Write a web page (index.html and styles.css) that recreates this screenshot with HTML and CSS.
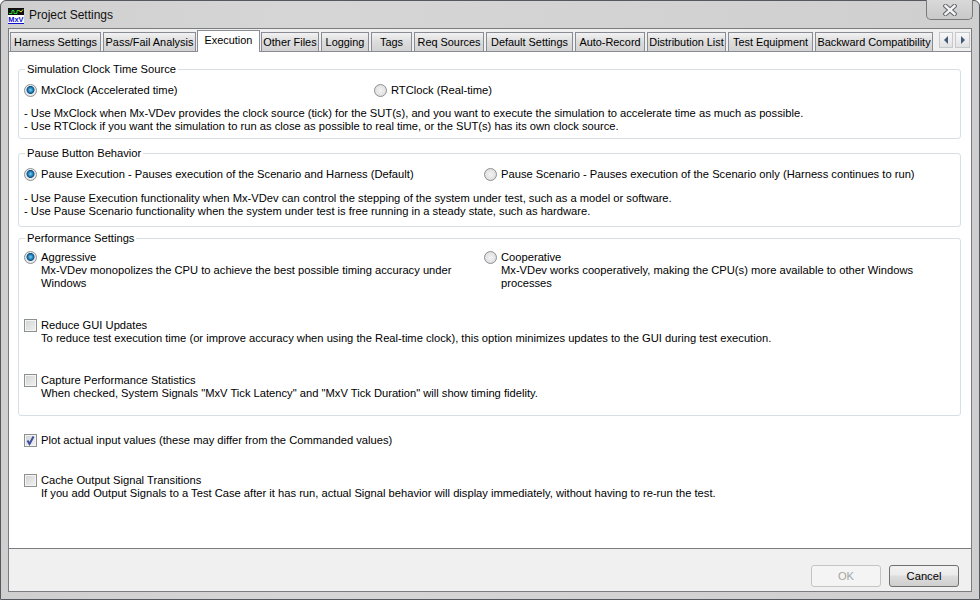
FILE: index.html
```html
<!DOCTYPE html>
<html lang="en">
<head>
<meta charset="utf-8">
<title>Project Settings</title>
<link rel="stylesheet" href="styles.css">
</head>
<body>
<div class="window">
  <header class="titlebar">
    <svg class="logo" width="16" height="16" viewBox="0 0 16 16">
      <rect width="16" height="7" fill="#101010"/>
      <path d="M1 5.5h3V2.5h2v3h3V2.5h2" fill="none" stroke="#2ed42e"/>
      <path d="M11 2.5l2 1.5 2-2.5" fill="none" stroke="#e8e820"/>
      <rect y="7" width="16" height="9" fill="#fff"/>
      <text x="0.3" y="14" class="logo-text">MxV</text>
      <rect y="15" width="16" height="1" fill="#1010d0"/>
    </svg>
    <span class="title">Project Settings</span>
    <button class="close" type="button" aria-label="Close">
      <svg width="14" height="12" viewBox="0 0 14 12"><path d="M2.5 2 11.5 10M11.5 2 2.5 10" stroke="#64666a" stroke-width="4.5" stroke-linecap="square"/><path d="M2.5 2 11.5 10M11.5 2 2.5 10" stroke="#f4f4f4" stroke-width="2.4" stroke-linecap="square"/></svg>
    </button>
  </header>
  <div class="client">
    <nav class="tabstrip">
      <div class="tabs">
        <span class="tab">Harness Settings</span>
        <span class="tab">Pass/Fail Analysis</span>
        <span class="tab active">Execution</span>
        <span class="tab">Other Files</span>
        <span class="tab">Logging</span>
        <span class="tab">Tags</span>
        <span class="tab">Req Sources</span>
        <span class="tab">Default Settings</span>
        <span class="tab">Auto-Record</span>
        <span class="tab">Distribution List</span>
        <span class="tab">Test Equipment</span>
        <span class="tab">Backward Compatibility</span>
      </div>
      <div class="scrollers">
        <span class="scroller first"><i class="arrow left"></i></span>
        <span class="scroller"><i class="arrow right"></i></span>
      </div>
    </nav>
    <main class="panel">
      <fieldset class="group group-clock">
        <legend>Simulation Clock Time Source</legend>
        <div class="choices choices-clock">
          <label class="opt"><span class="radio on"></span><span>MxClock (Accelerated time)</span></label>
          <label class="opt"><span class="radio"></span><span>RTClock (Real-time)</span></label>
        </div>
        <p class="note note-clock">- Use MxClock when Mx-VDev provides the clock source (tick) for the SUT(s), and you want to execute the simulation to accelerate time as much as possible.<br>- Use RTClock if you want the simulation to run as close as possible to real time, or the SUT(s) has its own clock source.</p>
      </fieldset>
      <fieldset class="group group-pause">
        <legend>Pause Button Behavior</legend>
        <div class="choices choices-pause">
          <label class="opt"><span class="radio on"></span><span>Pause Execution - Pauses execution of the Scenario and Harness (Default)</span></label>
          <label class="opt"><span class="radio"></span><span>Pause Scenario - Pauses execution of the Scenario only (Harness continues to run)</span></label>
        </div>
        <p class="note">- Use Pause Execution functionality when Mx-VDev can control the stepping of the system under test, such as a model or software.<br>- Use Pause Scenario functionality when the system under test is free running in a steady state, such as hardware.</p>
      </fieldset>
      <fieldset class="group group-perf">
        <legend>Performance Settings</legend>
        <div class="choices choices-perf">
          <label class="opt"><span class="radio on"></span><span>Aggressive<br>Mx-VDev monopolizes the CPU to achieve the best possible timing accuracy under<br>Windows</span></label>
          <label class="opt"><span class="radio"></span><span>Cooperative<br>Mx-VDev works cooperatively, making the CPU(s) more available to other Windows<br>processes</span></label>
        </div>
        <label class="opt"><span class="check"></span><span>Reduce GUI Updates<br>To reduce test execution time (or improve accuracy when using the Real-time clock), this option minimizes updates to the GUI during test execution.</span></label>
        <label class="opt check-stats"><span class="check"></span><span>Capture Performance Statistics<br>When checked, System Signals "MxV Tick Latency" and "MxV Tick Duration" will show timing fidelity.</span></label>
      </fieldset>
      <label class="opt outer check-plot"><span class="check">
        <svg width="13" height="13" viewBox="0 0 13 13"><path d="M3.5 6.5 5.5 10 9.5 2.5" fill="none" stroke="#3c4f9e" stroke-width="2"/></svg>
      </span><span>Plot actual input values (these may differ from the Commanded values)</span></label>
      <label class="opt outer check-cache"><span class="check"></span><span>Cache Output Signal Transitions<br>If you add Output Signals to a Test Case after it has run, actual Signal behavior will display immediately, without having to re-run the test.</span></label>
    </main>
    <footer class="actions">
      <button class="btn" type="button" disabled>OK</button>
      <button class="btn" type="button">Cancel</button>
    </footer>
  </div>
</div>
</body>
</html>
```

FILE: styles.css
```css
* { box-sizing: border-box; }
html, body { margin: 0; padding: 0; }
body {
  width: 980px;
  height: 600px;
  overflow: hidden;
  font-family: "Liberation Sans", Arial, sans-serif;
  font-size: 11.18px;
  line-height: 13px;
  color: #000;
}
.window {
  width: 980px;
  height: 600px;
  display: flex;
  flex-direction: column;
  padding: 0 7px 7px 7px;
  border: 1px solid #55585c;
  border-radius: 6px 6px 0 0;
  background: linear-gradient(90deg, #cfcfcf, #d6d6d6 30%, #cfcfcf);
}
.titlebar {
  height: 27px;
  flex: none;
  display: flex;
  align-items: center;
  gap: 5px;
  padding-top: 2px;
  position: relative;
}
.logo { flex: none; }
.logo-text { font-family: "Liberation Sans", sans-serif; font-size: 7.4px; font-weight: 700; fill: #1010d0; }
.title { font-size: 12px; color: #111; }
.close {
  position: absolute;
  top: -1px;
  right: -1px;
  width: 47px;
  height: 20px;
  padding: 0;
  border: 1px solid #77797d;
  border-top: 0;
  border-radius: 0 0 5px 5px;
  background: linear-gradient(#d9d9d9, #c9c9c9);
  display: flex;
  align-items: center;
  justify-content: center;
}
.client {
  flex: 1;
  display: flex;
  flex-direction: column;
  background: #f0f0f0;
  border: 1px solid #7a7c80;
}
.tabstrip {
  height: 22px;
  flex: none;
  display: flex;
  align-items: flex-end;
  justify-content: space-between;
  padding-left: 1px;
  position: relative;
  z-index: 1;
}
.tabs {
  display: grid;
  grid-template-columns: 91px 93px 61px 58px 48px 41px 70px 87px 70px 79px 85px 118px;
  column-gap: 2px;
  align-items: end;
  font-size: 10.9px;
}
.tab {
  height: 19px;
  display: flex;
  align-items: center;
  justify-content: center;
  border: 1px solid #898c95;
  border-bottom: 0;
  background: linear-gradient(#f2f2f2, #dcdcdc 50%, #d2d2d2);
  white-space: nowrap;
}
.tab.active {
  height: 22px;
  margin: 0 -1px -1px -1px;
  padding-bottom: 3px;
  background: #fff;
  position: relative;
  z-index: 1;
}
.scrollers { display: flex; gap: 2px; margin: 0 1px 3px 0; }
.scroller {
  width: 15px;
  height: 16px;
  border: 1px solid #c6c8cc;
  background: linear-gradient(#f8f8f8, #e2e2e2);
  display: flex;
  align-items: center;
  justify-content: center;
}
.scroller.first { width: 14px; }
.arrow { width: 0; height: 0; border: 4px solid transparent; }
.arrow.left { border-right: 4px solid #44587a; border-left: 0; }
.arrow.right { border-left: 4px solid #44587a; border-right: 0; }
.panel {
  height: 498px;
  flex: none;
  background: #fff;
  border-top: 1px solid #898c95;
  border-bottom: 1px solid #7a7c80;
  padding: 11px 10px 0 9px;
}
.group {
  margin: 0;
  padding: 0 5px;
  border: 1px solid #d5dfe5;
  border-radius: 3px;
  min-width: 0;
}
.group-clock { height: 76px; margin-bottom: 8px; }
.group-pause { height: 80px; margin-bottom: 5px; }
.group-perf { height: 184px; }
legend { padding: 0 2px; margin-left: 1px; }
.choices { display: grid; grid-template-columns: 460px 1fr; margin-top: 8px; }
.choices-clock { grid-template-columns: 350px 1fr; }
.choices-perf { height: 68px; margin-top: 6px; }
.opt { display: flex; align-items: flex-start; gap: 4px; }
.note { margin: 10px 0 0 0; }
.choices-pause + .note { margin-top: 11px; }
.radio {
  flex: none;
  width: 13px;
  height: 13px;
  border-radius: 50%;
  border: 1px solid #8c8f93;
  background: radial-gradient(circle, #f3f3f3, #d8d8d8);
}
.radio.on {
  background: radial-gradient(circle at 50% 45%, #7fd0ee 0, #1f7fb6 30%, #14507f 44%, #eeeeee 54%, #dcdcdc 100%);
}
.check {
  flex: none;
  width: 13px;
  height: 13px;
  border: 1px solid #8e8f8f;
  background: linear-gradient(135deg, #d2d2d2, #f2f2f2);
  box-shadow: inset 0 0 0 1px #f4f4f4;
  display: block;
}
.check svg { display: block; margin: -1px; }
.check-stats { margin-top: 29px; }
.outer { margin-left: 6px; }
.check-plot { margin-top: 18px; }
.check-cache { margin-top: 27px; }
.actions {
  flex: 1;
  display: flex;
  justify-content: flex-end;
  align-items: flex-start;
  gap: 8px;
  padding: 16px 12px 0 0;
}
.btn {
  width: 70px;
  height: 22px;
  padding: 0;
  border: 1px solid #707070;
  border-radius: 3px;
  font: inherit;
  color: #000;
  background: linear-gradient(#f2f2f2, #ebebeb 45%, #dddddd 50%, #cfcfcf);
}
.btn:disabled {
  border-color: #c4c4c4;
  color: #a6a6a6;
  background: #f4f4f4;
}
```
